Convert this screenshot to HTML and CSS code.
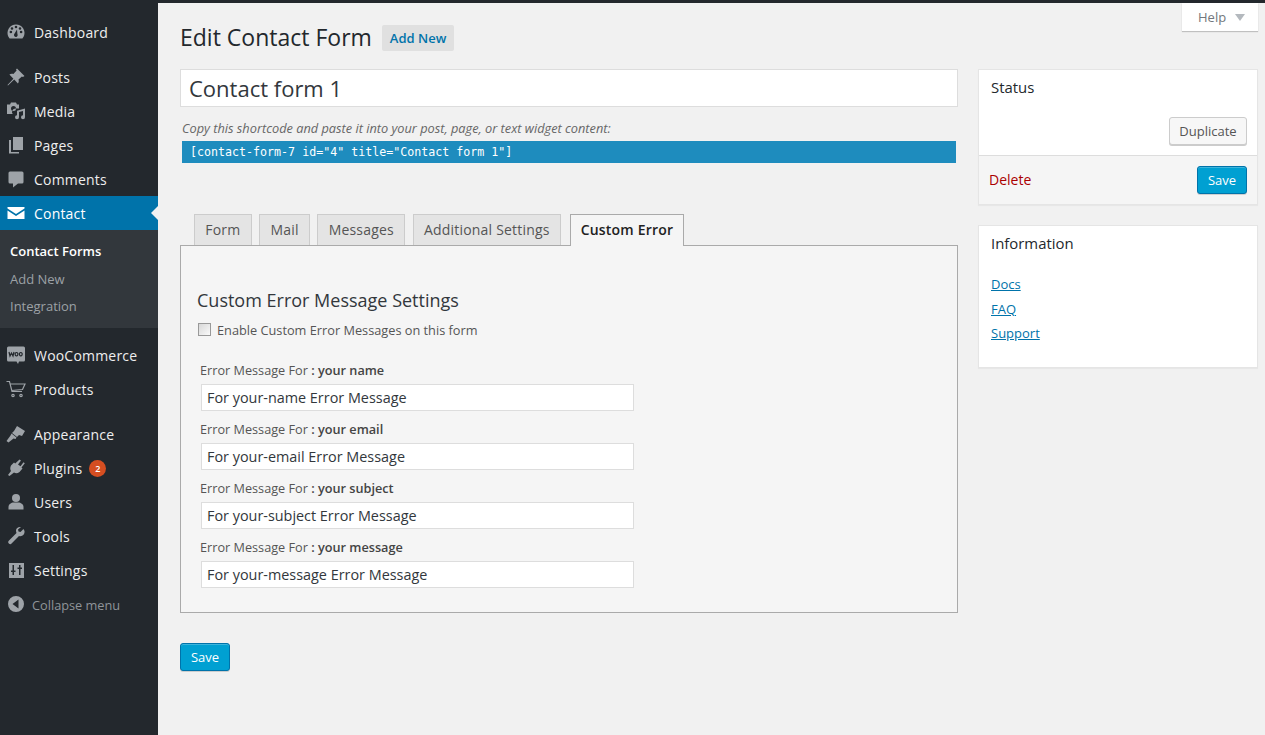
FILE: index.html
```html
<!DOCTYPE html>
<html lang="en">
<head>
<meta charset="utf-8">
<title>Edit Contact Form</title>
<link rel="stylesheet" href="styles.css">
</head>
<body>
<div class="topbar"></div>
<div class="shell">
  <nav class="adminmenu">
    <ul class="menu">
      <li class="item"><svg class="ic" viewBox="0 0 20 20"><path d="M10 2.500a8.500 8.500 0 0 0-7.600 12.300l1.200 1.700h12.800l1.200-1.700A8.500 8.500 0 0 0 10 2.500zM6 5.200a1.300 1.300 0 1 1 0 2.600 1.300 1.300 0 0 1 0-2.600zM3.600 10a1.300 1.300 0 1 1 2.600 0 1.300 1.300 0 0 1-2.600 0zM10 3.700a1.300 1.300 0 1 1 0 2.600 1.300 1.300 0 0 1 0-2.600zM10 15a2 2 0 0 1-1.400-3.400L11 7.500l.4 4.600A2 2 0 0 1 10 15zm4-7.200a1.300 1.300 0 1 1 0-2.600 1.300 1.300 0 0 1 0 2.600zm2.400 2.200a1.300 1.300 0 1 1-2.600 0 1.300 1.300 0 0 1 2.600 0z" fill-rule="evenodd"/></svg><span>Dashboard</span></li>
      <li class="sep"></li>
      <li class="item"><svg class="ic" viewBox="0 0 20 20"><path d="M11 1.500l7.500 7.500-1.600 1-1-.6-3.400 3.200c.6 1.700.2 3-.6 4L8.200 12.500 2 18.500l-.5-.5 5.900-6.300L3.400 7.600c1-.8 2.300-1.200 4-.6l3.200-3.400-.6-1z"/></svg><span>Posts</span></li>
      <li class="item"><svg class="ic" viewBox="0 0 20 20"><path d="M1 3.500h3l1-2h5l1 2h2v4H9.500a3.500 3.500 0 0 0-2.800 5.600H1zM7.500 5a2.500 2.500 0 1 0 0 5 2.500 2.500 0 0 0 0-5z" fill-rule="evenodd"/><path d="M19 7.500v8.800a2 2 0 1 1-2-2v-4.300l-4 1v5.300a2 2 0 1 1-2-2V9.800z"/></svg><span>Media</span></li>
      <li class="item"><svg class="ic" viewBox="0 0 20 20"><path d="M7 2h10v13H7z"/><path d="M5 5v12h8v1.500H3V5z"/></svg><span>Pages</span></li>
      <li class="item"><svg class="ic" viewBox="0 0 20 20"><path d="M4 2.500h12a1.500 1.500 0 0 1 1.500 1.500v9a1.500 1.500 0 0 1-1.500 1.500h-4L7 18.500v-4H4A1.500 1.500 0 0 1 2.500 13V4A1.500 1.500 0 0 1 4 2.500z"/></svg><span>Comments</span></li>
      <li class="item current"><svg class="ic" viewBox="0 0 20 20"><path d="M1.500 4h17v1.500L10 11 1.500 5.500z"/><path d="M1.500 7.500L10 13l8.500-5.500V16h-17z"/></svg><span>Contact</span></li>
      <li class="submenu">
        <a class="sub sub-on">Contact Forms</a>
        <a class="sub">Add New</a>
        <a class="sub">Integration</a>
      </li>
      <li class="sep-sub"></li>
      <li class="item"><svg class="ic" viewBox="0 0 20 20"><path class="woo-bg" d="M2.500 1.500h15A1.500 1.500 0 0 1 19 3v12a1.500 1.500 0 0 1-1.500 1.500H13L12 19l-1.500-2.500h-8A1.500 1.500 0 0 1 1 15V3a1.500 1.500 0 0 1 1.500-1.500z"/><path class="woo-fg" d="M3 7l1 4 1.500-3 1.500 3 1-4M10.500 7.500a1.400 1.700 0 1 0 .01 0zM14.800 7.500a1.400 1.700 0 1 0 .01 0z"/></svg><span>WooCommerce</span></li>
      <li class="item"><svg class="ic ic-line" viewBox="0 0 20 20"><path d="M.5 2.500h3l2.500 10h10M4.300 5h14.700l-2.500 5.500-11 1"/><circle cx="7" cy="16.500" r="1.200"/><circle cx="15" cy="16.500" r="1.200"/></svg><span>Products</span></li>
      <li class="sep"></li>
      <li class="item"><svg class="ic" viewBox="0 0 20 20"><path d="M11 2l8 5-3 5-3-1-2 2-5-4 2-2z"/><path d="M5.500 9.500l5 4-1 1.500-2-.5-5 4-2-1.500 4-5.500z"/></svg><span>Appearance</span></li>
      <li class="item"><svg class="ic" viewBox="0 0 20 20"><path d="M13.500 1.500l1.500 1-3 4 2.500 1.700 3-4 1.300 1-3.300 4.300 1 1-3 3.500c-2 1.500-4 1.500-5.500.5L3.500 18 2 17l3-4c-1-1.500-1-3.500 0-5.500L8 4.500l1.200 1z"/></svg><span>Plugins</span><b class="badge">2</b></li>
      <li class="item"><svg class="ic" viewBox="0 0 20 20"><circle cx="10" cy="6" r="4"/><path d="M2.500 17.500v-2.500c0-3 3-4.500 5-4.500h5c2 0 5 1.500 5 4.500v2.500z"/></svg><span>Users</span></li>
      <li class="item"><svg class="ic" viewBox="0 0 20 20"><path d="M17.500 3l-3 3-2-.5-.5-2 3-2.500C12.500.5 10 2 10 4.500c0 1 .1 1.700.5 2.500l-7.500 7.500a2 2 0 1 0 2.800 2.800L13 10c3 1 6-1.500 5.500-5z"/></svg><span>Tools</span></li>
      <li class="item"><svg class="ic" viewBox="0 0 20 20"><path fill-rule="evenodd" d="M3 3h15v15H3zM6.500 5v5.500H5V12h1.500v3H8v-3h1.500v-1.500H8V5zm6.500 0v2.500h-1.500V9H13v6h1.500V9H16V7.500h-1.500V5z"/></svg><span>Settings</span></li>
      <li class="collapse"><svg class="ic" viewBox="0 0 20 20"><path fill-rule="evenodd" d="M10 2a8 8 0 1 1 0 16 8 8 0 0 1 0-16zm2.500 3.500L6.500 10l6 4.500z"/></svg><span>Collapse menu</span></li>
    </ul>
  </nav>

  <div class="content">
    <div class="help-row"><div class="help">Help<i class="caret"></i></div></div>
    <div class="title-row">
      <h1 class="page-title">Edit Contact Form</h1>
      <a class="add-new">Add New</a>
    </div>
    <div class="columns">
      <main class="primary">
        <div class="title-input">Contact form 1</div>
        <p class="hint">Copy this shortcode and paste it into your post, page, or text widget content:</p>
        <div class="shortcode">[contact-form-7 id="4" title="Contact form 1"]</div>
        <div class="tabs">
          <span class="tab">Form</span>
          <span class="tab">Mail</span>
          <span class="tab">Messages</span>
          <span class="tab">Additional Settings</span>
          <span class="tab tab-on">Custom Error</span>
        </div>
        <section class="panel">
          <h2 class="panel-title">Custom Error Message Settings</h2>
          <label class="enable"><span class="check"></span>Enable Custom Error Messages on this form</label>
          <div class="fields">
            <div class="field"><div class="field-label">Error Message For <b>: your name</b></div><div class="text-input">For your-name Error Message</div></div>
            <div class="field"><div class="field-label">Error Message For <b>: your email</b></div><div class="text-input">For your-email Error Message</div></div>
            <div class="field"><div class="field-label">Error Message For <b>: your subject</b></div><div class="text-input">For your-subject Error Message</div></div>
            <div class="field"><div class="field-label">Error Message For <b>: your message</b></div><div class="text-input">For your-message Error Message</div></div>
          </div>
        </section>
        <a class="btn-primary btn-bottom">Save</a>
      </main>
      <aside class="side">
        <div class="box">
          <h3 class="box-title">Status</h3>
          <div class="box-actions"><a class="btn">Duplicate</a></div>
          <div class="box-foot"><a class="delete">Delete</a><a class="btn-primary">Save</a></div>
        </div>
        <div class="box box-info">
          <h3 class="box-title">Information</h3>
          <ul class="links">
            <li><a>Docs</a></li>
            <li><a>FAQ</a></li>
            <li><a>Support</a></li>
          </ul>
        </div>
      </aside>
    </div>
  </div>
</div>
</body>
</html>
```
FILE: styles.css
```css
* { box-sizing: border-box; }
html, body { margin: 0; height: 100%; }
body { background: #f1f1f1; color: #444; font: 13px/1.4 "Open Sans", sans-serif; overflow: hidden; }
ul { list-style: none; margin: 0; padding: 0; }
.topbar { height: 3px; background: #23282d; }
.shell { display: flex; height: 732px; }

.adminmenu { width: 158px; flex: none; background: #23282d; padding-top: 12px; }
.item { height: 34px; display: flex; align-items: center; color: #eee; font-size: 14px; letter-spacing: .2px; position: relative; }
.item > span { margin-left: 10px; padding-top: 2px; }
.ic { width: 20px; height: 20px; margin-left: 6px; margin-right: -2px; fill: #9ea3a8; flex: none; }
.ic-line { fill: none; stroke: #9ea3a8; stroke-width: 1.2; }
.woo-bg { fill: #9ea3a8; }
.woo-fg { fill: none; stroke: #23282d; stroke-width: 1.2; }
.sep { height: 11px; }
.sep-sub { height: 10px; }
.current { background: #0073aa; color: #fff; }
.current .ic { fill: #fff; }
.current::after { content: ""; position: absolute; right: 0; top: 10px; border: 7px solid transparent; border-right-color: #f1f1f1; border-left: 0; }
.submenu { background: #32373c; height: 98px; padding-top: 8px; display: flex; flex-direction: column; }
.sub { display: block; height: 27.5px; line-height: 27px; padding-left: 10px; font-size: 13px; color: #9ca1a6; }
.sub-on { color: #fff; font-weight: 600; }
.badge { margin: 1px 0 0 7px; width: 17px; height: 17px; border-radius: 50%; background: #d54e21; color: #fff; font-size: 9px; font-weight: 600; line-height: 17px; text-align: center; letter-spacing: 0; }
.collapse { height: 34px; display: flex; align-items: center; color: #8f9499; font-size: 12.75px; }
.collapse span { margin-left: 8px; padding-top: 3px; }

.content { flex: 1; min-width: 0; padding: 0 7px 0 22px; position: relative; }
.help-row { display: flex; justify-content: flex-end; height: 0; position: relative; z-index: 1; }
.help { width: 76px; height: 28px; background: #fff; color: #72777c; font-size: 13px; line-height: 28px; padding-left: 16px; display: flex; align-items: center; box-shadow: 0 1px 1px rgba(0,0,0,.2); flex: none; }
.caret { margin-left: 9px; border: 5px solid transparent; border-top: 7px solid #b4b9be; border-bottom: 0; }
.title-row { display: flex; align-items: flex-start; padding-top: 20px; height: 66px; }
.page-title { margin: 0; font-size: 23px; font-weight: 400; color: #23282d; line-height: 29px; }
.add-new { margin: 2px 0 0 10px; height: 26px; padding: 0 8px; border-radius: 2px; background: #e0e0e0; color: #0073aa; font-weight: 600; font-size: 13px; line-height: 26px; }
.columns { display: flex; gap: 20px; align-items: flex-start; }
.primary { width: 778px; flex: none; }
.side { width: 280px; flex: none; }

.title-input { height: 38px; border: 1px solid #ddd; background: #fff; font-size: 22px; color: #32373c; padding: 0 8px; line-height: 37px; }
.hint { margin: 12px 0 0 2px; font-size: 12.77px; font-style: italic; color: #666; line-height: 18px; height: 22px; }
.shortcode { margin-left: 2px; width: 774px; height: 22px; background: #1e8cbe; color: #fff; font: 11.65px/23px "DejaVu Sans Mono", monospace; padding-left: 8px; }

.tabs { display: flex; gap: 7.5px; margin-top: 51px; padding-left: 14px; height: 31px; align-items: flex-end; position: relative; z-index: 1; }
.tab { height: 31px; padding: 0 10.25px; border: 1px solid #ccc; border-bottom: 0; background: #e4e4e4; color: #555; font-size: 14px; letter-spacing: .2px; line-height: 30px; }
.tab-on { background: #f5f5f5; color: #222; font-weight: 600; border-color: #aaa; height: 32px; margin: 0 0 -1px 1.5px; padding: 0 9.75px; }
.panel { height: 368px; border: 1px solid #aaa; background: #f5f5f5; padding: 42px 16px 0; }
.panel-title { margin: 0; font-size: 18px; font-weight: 400; color: #32373c; line-height: 24px; }
.enable { display: flex; align-items: center; margin-top: 10px; height: 18px; font-size: 12.75px; color: #555; }
.check { width: 13px; height: 13px; border: 1px solid #999; background: linear-gradient(135deg, #d8d8d8, #fafafa); margin: 0 6px 3px 1px; }
.fields { margin-top: 20px; padding-left: 3px; display: flex; flex-direction: column; gap: 5px; }
.field { height: 54px; }
.field-label { font-size: 12.7px; color: #555; line-height: 18px; height: 24px; padding-top: 1px; }
.field-label b { font-weight: 600; color: #444; }
.text-input { margin-left: 1px; width: 433px; height: 27px; border: 1px solid #ddd; background: #fff; padding-left: 5px; font-size: 14.4px; line-height: 26px; color: #32373c; }

.btn-primary { display: inline-block; width: 50px; height: 28px; background: #00a0d2; border: 1px solid #0073aa; border-radius: 3px; color: #fff; font-size: 13px; line-height: 26px; text-align: center; box-shadow: inset 0 1px 0 rgba(120,200,230,.5), 0 1px 0 rgba(0,0,0,.15); }
.btn-bottom { margin-top: 30px; }
.box { background: #fff; border: 1px solid #e5e5e5; box-shadow: 0 1px 1px rgba(0,0,0,.04); }
.box-title { margin: 0; padding: 7px 12px 0; font-size: 14.9px; color: #23282d; line-height: 20px; height: 37px; font-weight: 500; }
.box-actions { display: flex; justify-content: flex-end; padding: 10px; height: 48px; }
.btn { display: block; width: 78px; height: 28px; border: 1px solid #ccc; border-radius: 3px; background: #f7f7f7; color: #555; font-size: 13px; line-height: 26px; text-align: center; box-shadow: 0 1px 0 #ccc; }
.box-foot { display: flex; justify-content: space-between; align-items: center; height: 49px; background: #f5f5f5; border-top: 1px solid #ddd; padding: 0 10px; }
.delete { color: #a00; font-size: 14px; }
.box-info { margin-top: 20px; height: 143px; }
.links { padding: 9px 12px 0; font-size: 13px; }
.links li { height: 24.5px; line-height: 24px; }
.links a { color: #0073aa; text-decoration: underline; }
```
